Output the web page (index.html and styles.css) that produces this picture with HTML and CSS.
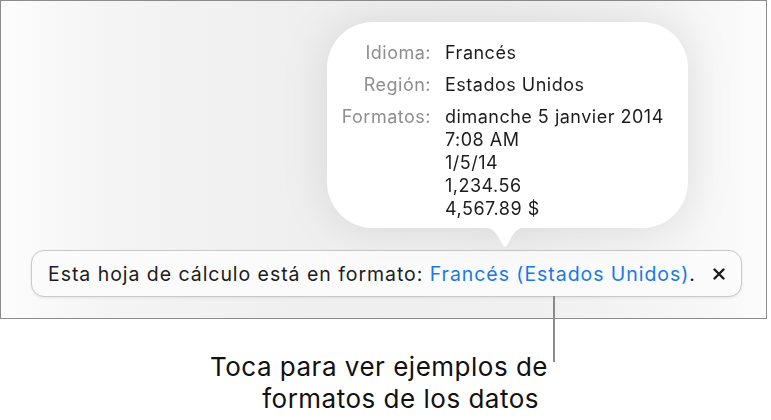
FILE: index.html
```html
<!DOCTYPE html>
<html lang="es">
<head>
    <meta charset="UTF-8">
    <meta name="viewport" content="width=device-width, initial-scale=1.0">
    <title>Formato de la hoja de cálculo</title>
    <link rel="stylesheet" href="styles.css">
</head>
<body>
    <div class="screen">
        <div class="popover">
            <div class="info-row">
                <span class="info-label">Idioma:</span>
                <span class="info-value">Francés</span>
            </div>
            <div class="info-row">
                <span class="info-label">Región:</span>
                <span class="info-value">Estados Unidos</span>
            </div>
            <div class="info-row">
                <span class="info-label">Formatos:</span>
                <span class="info-value">
                    dimanche 5 janvier 2014<br>
                    7:08 AM<br>
                    1/5/14<br>
                    1,234.56<br>
                    4,567.89 $
                </span>
            </div>
            <svg class="popover-tail" width="48" height="22" viewBox="0 0 48 22">
                <path d="M0 0 C9 0 13 3 17 9 L22 18 Q24 21.5 26 18 L31 9 C35 3 39 0 48 0 Z" fill="#fff"/>
            </svg>
        </div>
        <div class="banner">
            <span class="banner-text">Esta hoja de cálculo está en formato: <a class="banner-link" href="#">Francés (Estados Unidos)</a>.</span>
            <svg class="banner-close" width="12" height="12" viewBox="0 0 12 12">
                <path d="M1.5 1.5 L10.5 10.5 M10.5 1.5 L1.5 10.5" stroke="#1c1c1c" stroke-width="2.4" stroke-linecap="round"/>
            </svg>
        </div>
    </div>
    <div class="caption">
        <span class="caption-line">Toca para ver ejemplos de</span>
        <span class="caption-line second">formatos de los datos</span>
    </div>
</body>
</html>
```

FILE: styles.css
```css
body {
    margin: 0;
    background: #fff;
    font-family: Inter, "Noto Sans", sans-serif;
    color: #1c1c1c;
}
.screen {
    width: 765px;
    height: 317px;
    border: 1px solid #8c8c8c;
    display: flex;
    flex-direction: column;
    background: linear-gradient(to right, #fdfdfd 0%, #f4f4f4 14%, #efefef 40%, #f0f0f0 70%, #f6f6f6 90%, #fcfcfc 100%);
}
.popover {
    position: relative;
    margin: 21px 0 0 326px;
    width: 361px;
    height: 206px;
    box-sizing: border-box;
    padding: 19px 0 0 13px;
    background: #fff;
    border-radius: 46px;
    filter: drop-shadow(0 0 22px rgba(0, 0, 0, 0.1));
    font-size: 18px;
    line-height: 23px;
    letter-spacing: 0.5px;
}
.info-row {
    display: flex;
    column-gap: 14px;
    margin-bottom: 9px;
}
.info-label {
    width: 91px;
    text-align: right;
    color: #8e8e8e;
}
.info-value {
    color: #1c1c1c;
}
.popover-tail {
    position: absolute;
    left: 154px;
    top: 205px;
}
.banner {
    margin: 22px 0 0 30px;
    width: 711px;
    height: 47px;
    box-sizing: border-box;
    border: 1px solid #c9c9c9;
    border-radius: 13px;
    background: #fbfbfb;
    box-shadow: 0 1px 3px rgba(0, 0, 0, 0.08);
    display: flex;
    align-items: center;
    justify-content: space-between;
    padding: 0 16px 0 16px;
    font-size: 19.5px;
    letter-spacing: 0.95px;
}
.banner-link {
    color: #1a7ae2;
    text-decoration: none;
}
.caption {
    position: relative;
    width: 548px;
    margin-top: 32px;
    display: flex;
    flex-direction: column;
    align-items: flex-end;
    font-size: 26px;
    line-height: 32px;
    letter-spacing: 0.5px;
    color: #111;
}
.caption::after {
    content: "";
    position: absolute;
    left: 553px;
    top: -55px;
    width: 2px;
    height: 66px;
    background: #8a8a8a;
}
.caption-line.second {
    margin-right: 9px;
}
```
